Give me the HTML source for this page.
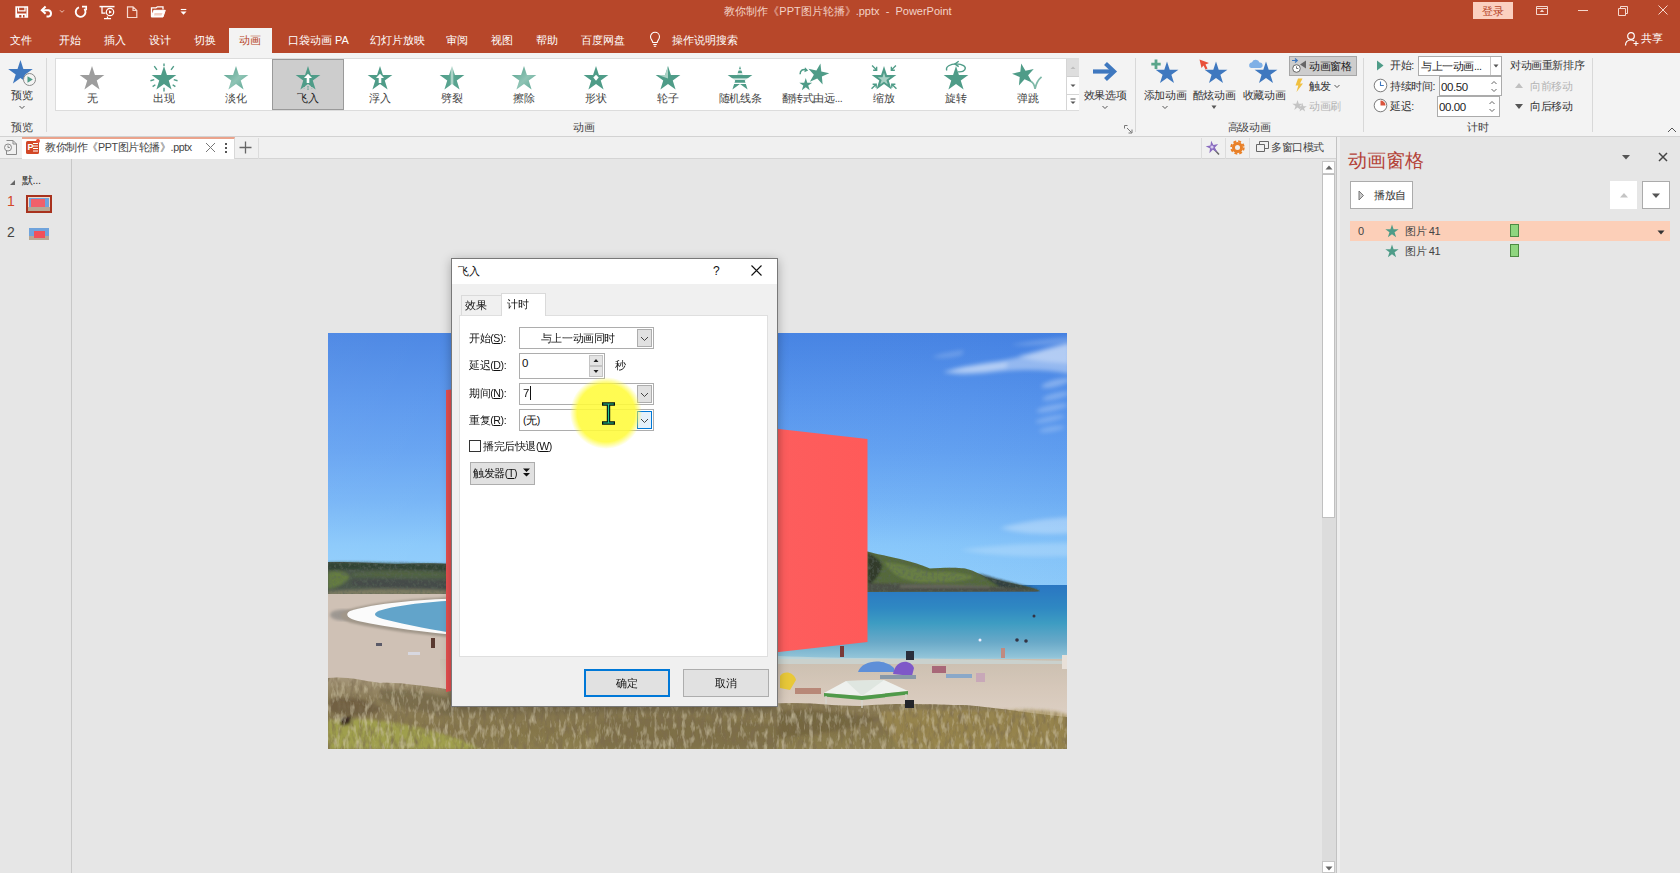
<!DOCTYPE html>
<html lang="zh">
<head>
<meta charset="utf-8">
<title>PowerPoint</title>
<style>
*{box-sizing:border-box;margin:0;padding:0}
html,body{width:1680px;height:873px;overflow:hidden;background:#e6e6e6}
body{font-family:"Liberation Sans",sans-serif;font-size:10.6px;letter-spacing:-0.4px;color:#333;position:relative}
.a{position:absolute;white-space:nowrap;line-height:1}
.t{position:absolute;white-space:nowrap;line-height:14px;height:14px;overflow:visible}
.c{text-align:center}
svg{position:absolute;overflow:visible}
#titlebar{left:0;top:0;width:1680px;height:53px;background:#b7472a}
#ribbon{left:0;top:53px;width:1680px;height:84px;background:#f3f3f3;border-bottom:1px solid #d2d2d2}
.tab{color:#fff;font-size:11px;top:33px;letter-spacing:0}
.sep{position:absolute;width:1px;background:#d8d8d8;top:58px;height:74px}
.gl{position:absolute;top:120px;font-size:10.6px;color:#444;line-height:14px;text-align:center}
.gi{position:absolute;top:59px;width:72px;height:51px}
.gi .lb{position:absolute;left:0;width:72px;top:32px;text-align:center;font-size:10.6px;line-height:14px;color:#444;white-space:nowrap}
.gi svg{left:23px;top:5.500px;width:26px;height:26px}
.big .lb{position:absolute;text-align:center;font-size:11px;line-height:14px;color:#333;white-space:nowrap}
</style>
</head>
<body>
<svg width="0" height="0" style="left:0;top:0">
<defs>
<path id="star" d="M12 1 L14.7 9.2 L23.4 9.2 L16.4 14.3 L19 22.6 L12 17.5 L5 22.6 L7.6 14.3 L0.6 9.2 L9.3 9.2 Z"/>
<linearGradient id="gfade" x1="0" y1="0" x2="1" y2="1"><stop offset="0" stop-color="#4f9c88"/><stop offset="0.55" stop-color="#8fc4b5"/><stop offset="1" stop-color="#5aa591"/></linearGradient>
<linearGradient id="gsplit" x1="0" y1="0" x2="1" y2="0"><stop offset="0" stop-color="#4f9c88"/><stop offset="0.42" stop-color="#5aa591"/><stop offset="0.5" stop-color="#c9e3da"/><stop offset="0.58" stop-color="#5aa591"/><stop offset="1" stop-color="#4f9c88"/></linearGradient>
</defs>
</svg>

<!-- ================= TITLE BAR ================= -->
<div class="a" id="titlebar"></div>
<!--QAT-->
<svg style="left:13px;top:4px" width="180" height="18" viewBox="0 0 180 18" fill="none" stroke="#fff" stroke-width="1.300">
 <!-- save -->
 <path d="M3.200 3 H14.300 V13 H3.200 Z" stroke-width="1.700"/><path d="M5.500 3 V6.800 H12 V3" stroke-width="1.300"/><path d="M4 9.500 H13.500 V13 H4 Z" fill="#fff" stroke="none"/><rect x="6.200" y="11" width="2.200" height="2.500" fill="#b7472a" stroke="none"/><rect x="10" y="11" width="1.500" height="2.500" fill="#b7472a" stroke="none"/>
 <!-- undo -->
 <path d="M29 6.200 H35.500 A3.300 3.300 0 0 1 35.500 12.600 H33.500" stroke-width="2"/><path d="M32.600 2.600 L28.800 6.200 L32.600 9.800" stroke-width="2" stroke-linejoin="miter"/>
 <path d="M47 6.300 L49 8.300 L51 6.300" stroke-width="1" stroke="#f0c8bb"/>
 <!-- redo/repeat -->
 <path d="M66 3.300 A4.900 4.900 0 1 0 71.400 4.800" stroke-width="1.900"/><path d="M69 2.700 H73.200 V6.200" stroke-width="1.700" stroke-linejoin="miter"/>
 <!-- present -->
 <path d="M86.500 2.600 H101.500" stroke-width="1.500"/><path d="M89 3 V9.200 H92.500 M94.500 12.500 V14.600 M91 14.600 H98" stroke-width="1.300"/><circle cx="97" cy="8" r="3.700" stroke-width="1.200"/><path d="M96 6.300 L99 8 L96 9.700 Z" fill="#fff" stroke="none"/>
 <!-- new -->
 <path d="M114.500 2.800 H120 L123.800 6.500 V13.500 H114.500 Z M120 2.800 V6.500 H123.800" stroke-width="1.200" stroke="#f7d9cf"/>
 <!-- open -->
 <path d="M138.500 12.500 V3.800 H143 L144.500 2.800 H150 V5.500" stroke-width="1.300"/><path d="M138.300 13 L140.800 6.300 H152.300 L150 13 Z" fill="#fff" stroke-width="1"/><path d="M141.500 9 L141 11.500 H148.500 L149.500 9 Z" fill="#f3cfc3" stroke="none"/>
 <!-- customise -->
 <path d="M167.800 5.500 H173.300" stroke-width="1.100"/><path d="M167.500 7.500 H173.500 L170.500 10.700 Z" fill="#fff" stroke="none"/>
</svg>
<!--TITLE-->
<div class="t c" style="left:638px;top:4px;width:400px;font-size:11px;letter-spacing:0;color:#f3d3c8">教你制作《PPT图片轮播》.pptx&nbsp; -&nbsp; PowerPoint</div>
<div class="a" style="left:1473px;top:2px;width:40px;height:17px;background:#fbd0c0"></div>
<div class="t c" style="left:1473px;top:4px;width:40px;font-size:10.6px;color:#b7472a">登录</div>
<svg style="left:1530px;top:0" width="150" height="22" viewBox="0 0 150 22" fill="none" stroke="#fff" stroke-width="1">
 <path d="M6.500 6.500 H17.500 V14.500 H6.500 Z M6.500 8.500 H17.500" stroke="#f5d8ce"/><path d="M12 9.5 L9.800 12 H14.200 Z" fill="#f5d8ce" stroke="none"/>
 <path d="M48 10.500 H58" stroke="#f5d8ce"/>
 <path d="M88.500 8.500 H95.500 V15.500 H88.500 Z M90.500 8.500 V6.500 H97.500 V13.500 H95.500" stroke="#f5d8ce"/>
 <path d="M128.500 5.500 L137.500 14.500 M137.500 5.500 L128.500 14.500" stroke="#f5d8ce"/>
</svg>
<!--TABS-->
<div class="a" style="left:229px;top:28px;width:43px;height:26px;background:#f3f3f3"></div>
<div class="t tab" style="left:239px;color:#b7472a">动画</div>
<div class="t tab" style="left:10px">文件</div>
<div class="t tab" style="left:59px">开始</div>
<div class="t tab" style="left:104px">插入</div>
<div class="t tab" style="left:149px">设计</div>
<div class="t tab" style="left:194px">切换</div>
<div class="t tab" style="left:288px">口袋动画 PA</div>
<div class="t tab" style="left:370px">幻灯片放映</div>
<div class="t tab" style="left:446px">审阅</div>
<div class="t tab" style="left:491px">视图</div>
<div class="t tab" style="left:536px">帮助</div>
<div class="t tab" style="left:581px">百度网盘</div>
<div class="t tab" style="left:672px">操作说明搜索</div>
<svg style="left:648px;top:31px" width="14" height="17" viewBox="0 0 14 17" fill="none" stroke="#fff" stroke-width="1.1"><path d="M4.800 11.500 C4.800 9.500 2.500 8.500 2.500 5.800 A4.500 4.500 0 0 1 11.500 5.800 C11.500 8.500 9.200 9.500 9.200 11.500 Z M5.200 13.500 H8.800 M5.800 15.300 H8.200"/></svg>
<svg style="left:1624px;top:31px" width="16" height="16" viewBox="0 0 16 16" fill="none" stroke="#fff" stroke-width="1.2"><circle cx="7" cy="5" r="3.300"/><path d="M1.500 14.500 C1.500 10.500 4 9 7 9 C8.500 9 9.500 9.400 10.300 10"/><path d="M12 10 V15 M9.500 12.500 H14.500" stroke-width="1.100"/></svg>
<div class="t tab" style="left:1641px;top:31px">共享</div>
<!-- ================= RIBBON ================= -->
<div class="a" id="ribbon"></div>
<!--RIBBON-->
<svg style="left:8px;top:59px" width="30" height="30" viewBox="0 0 30 30"><use href="#star" fill="#3f78bf" transform="translate(-0.500,0) scale(1.080)"/><circle cx="21.500" cy="20.500" r="6" fill="#f3f3f3" stroke="#8a8a8a" stroke-width="1"/><path d="M19.500 17.300 L24.800 20.500 L19.500 23.700 Z" fill="#4f9c88"/></svg>
<div class="t c" style="left:0;top:88px;width:44px;color:#333">预览</div>
<svg style="left:18px;top:105px" width="8" height="5" viewBox="0 0 8 5"><path d="M1.500 1 L4 3.500 L6.500 1" fill="none" stroke="#555" stroke-width="1"/></svg>
<div class="gl" style="left:0;width:44px">预览</div>
<div class="sep" style="left:46px"></div>
<div class="a" style="left:55px;top:58px;width:1024px;height:53px;background:#fff;border:1px solid #dcdcdc"></div>
<div class="a" style="left:272px;top:59px;width:72px;height:51px;background:#cdcdcd;border:1px solid #9a9a9a"></div>
<div class="gi" style="left:56px"><svg viewBox="0 0 24 24"><use href="#star" fill="#9d9d9d"/></svg><div class="lb">无</div></div>
<div class="gi" style="left:128px"><svg viewBox="0 0 24 24"><g stroke="#4f9c88" stroke-width="1.3" fill="none"><path d="M12 -1.500 V1 M3 1 L5.500 4.500 M21 1 L18.500 4.500 M-0.500 14.500 L3 13.500 M24.500 14.500 L21 13.500 M12 21 V24.500 M1.500 20 L4 18.200 M22.500 20 L20 18.200"/></g><use href="#star" fill="#4f9c88"/></svg><div class="lb">出现</div></div>
<div class="gi" style="left:200px"><svg viewBox="0 0 24 24"><use href="#star" fill="url(#gfade)"/></svg><div class="lb">淡化</div></div>
<div class="gi" style="left:272px"><svg viewBox="0 0 24 24"><use href="#star" fill="#4f9c88"/><path d="M12 8 L8.300 12 H10.800 V16.500 H13.200 V12 H15.700 Z" fill="#fff"/><path d="M8.500 19 V21.500 M12 19.500 V23 M15.500 19 V21.500" stroke="#4f9c88" stroke-width="1.200" stroke-dasharray="1.200 1"/></svg><div class="lb" style="color:#222">飞入</div></div>
<div class="gi" style="left:344px"><svg viewBox="0 0 24 24"><use href="#star" fill="#4f9c88"/><path d="M12 8 L8.300 12 H10.800 V16.500 H13.200 V12 H15.700 Z" fill="#fff"/></svg><div class="lb">浮入</div></div>
<div class="gi" style="left:416px"><svg viewBox="0 0 24 24"><use href="#star" fill="url(#gsplit)"/></svg><div class="lb">劈裂</div></div>
<div class="gi" style="left:488px"><svg viewBox="0 0 24 24"><use href="#star" fill="url(#gfade)"/></svg><div class="lb">擦除</div></div>
<div class="gi" style="left:560px"><svg viewBox="0 0 24 24"><use href="#star" fill="#4f9c88"/><path d="M12 9 L14.500 11.500 L12 14.500 L9.500 11.500 Z" fill="#fff"/></svg><div class="lb">形状</div></div>
<div class="gi" style="left:632px"><svg viewBox="0 0 24 24"><use href="#star" fill="#4f9c88"/><path d="M12 12.500 L12 1 L9.300 9.200 L3 9.200 Z" fill="#b5d8cd" opacity="0.9"/></svg><div class="lb">轮子</div></div>
<div class="gi" style="left:704px"><svg viewBox="0 0 24 24"><use href="#star" fill="#4f9c88"/><path d="M0 4.500 H24 M0 8.300 H24 M0 13 H24 M0 17 H24" stroke="#fff" stroke-width="1.300"/></svg><div class="lb">随机线条</div></div>
<div class="gi" style="left:776px"><svg viewBox="0 0 24 24"><use href="#star" fill="#4f9c88" transform="translate(7.500,-2.500) scale(0.860) rotate(12 12 12)"/><use href="#star" fill="#4f9c88" transform="translate(0,11.500) scale(0.520)"/><path d="M1 8.500 C1 4.500 4 3.500 7 4.500" fill="none" stroke="#4f9c88" stroke-width="1.400"/><path d="M5.500 2 L8.500 5 L5 6.800 Z" fill="#4f9c88"/></svg><div class="lb">翻转式由远...</div></div>
<div class="gi" style="left:848px"><svg viewBox="0 0 24 24"><use href="#star" fill="#4f9c88"/><use href="#star" fill="#a9d1c5" transform="translate(6,6.600) scale(0.500)"/><g stroke="#4f9c88" stroke-width="1.300" fill="none"><path d="M1 0.500 L5 4.500 M2 4.800 H5.200 V1.600 M23 0.500 L19 4.500 M22 4.800 H18.800 V1.600 M0.500 22 L4.500 18 M1.500 17.800 H4.800 V21 M23.500 22 L19.500 18 M22.500 17.800 H19.200 V21"/></g></svg><div class="lb">缩放</div></div>
<div class="gi" style="left:920px"><svg viewBox="0 0 24 24"><use href="#star" fill="#4f9c88"/><path d="M3.500 5 C2 1.500 7 -1 12 -1 C18 -1 22 1.500 20 4.500 C19 6 16 6.500 14 6.300" fill="none" stroke="#4f9c88" stroke-width="1.300"/><path d="M14.500 -3.500 L11 -1 L14.500 1.500" fill="none" stroke="#4f9c88" stroke-width="1.300"/></svg><div class="lb">旋转</div></div>
<div class="gi" style="left:992px"><svg viewBox="0 0 24 24"><use href="#star" fill="#4f9c88" transform="translate(-3,-2.500) scale(0.900) rotate(-12 12 12)"/><path d="M14.500 15 C16.500 16 18 18.500 18.500 22 C19.500 17 21.500 13.500 24.500 11" fill="none" stroke="#7fb9a8" stroke-width="1.600"/></svg><div class="lb">弹跳</div></div>
<div class="a" style="left:1066px;top:59px;width:13px;height:51px;background:#fff;border-left:1px solid #d5d5d5"></div>
<div class="a" style="left:1067px;top:59px;width:12px;height:18px;background:#dedede;border-bottom:1px solid #cfcfcf"></div>
<div class="a" style="left:1067px;top:94px;width:12px;height:1px;background:#d5d5d5"></div>
<svg style="left:1067px;top:59px" width="12" height="51" viewBox="0 0 12 51"><path d="M3.500 10 L6 7.500 L8.500 10 Z" fill="#bdbdbd"/><path d="M3.500 25.500 H8.500 L6 28 Z" fill="#555"/><path d="M3.500 40 H8.500" stroke="#555" stroke-width="1"/><path d="M3.500 42.500 H8.500 L6 45 Z" fill="#555"/></svg>
<svg style="left:1092px;top:61px" width="26" height="22" viewBox="0 0 26 22"><path d="M1 10.500 H21" stroke="#3f78bf" stroke-width="4.200" fill="none"/><path d="M13.500 2.500 L22 10.500 L13.500 18.500" stroke="#3f78bf" stroke-width="4.200" fill="none"/></svg>
<div class="t c" style="left:1080px;top:88px;width:50px;color:#333">效果选项</div>
<svg style="left:1101px;top:105px" width="8" height="5" viewBox="0 0 8 5"><path d="M1.500 1 L4 3.500 L6.500 1" fill="none" stroke="#555" stroke-width="1"/></svg>
<div class="gl" style="left:564px;width:40px">动画</div>
<svg style="left:1124px;top:125px" width="9" height="9" viewBox="0 0 9 9" fill="none" stroke="#777" stroke-width="1"><path d="M0.500 3.500 V0.500 H3.500 M3 3 L7.500 7.500 M4.500 8 H8 V4.500"/></svg>
<div class="sep" style="left:1135px"></div>
<svg style="left:1148px;top:57px" width="34" height="30" viewBox="0 0 34 30"><use href="#star" fill="#3f78bf" transform="translate(7,3.500) scale(1)"/><path d="M8 2.500 V12 M3.300 7.200 H12.700" stroke="#5aa58a" stroke-width="2.800" fill="none"/></svg>
<div class="t c" style="left:1140px;top:88px;width:50px;color:#333">添加动画</div>
<svg style="left:1197px;top:57px" width="34" height="30" viewBox="0 0 34 30"><use href="#star" fill="#3f78bf" transform="translate(7,3.500) scale(1)"/><path d="M2.500 2.500 L12 6 L8.500 7.500 L10.500 11.500 L8.500 12.500 L6.500 8.500 L4.500 11 Z" fill="#e8503a"/></svg>
<div class="t c" style="left:1189px;top:88px;width:50px;color:#333">酷炫动画</div>
<svg style="left:1247px;top:57px" width="34" height="30" viewBox="0 0 34 30"><use href="#star" fill="#3f78bf" transform="translate(7,3.500) scale(1)"/><path d="M4 11 A3 3 0 0 1 5 5.200 A4 4 0 0 1 12.500 5.500 A2.800 2.800 0 0 1 13.500 11 Z" fill="#7fb0e6"/></svg>
<div class="t c" style="left:1239px;top:88px;width:50px;color:#333">收藏动画</div>
<svg style="left:1161px;top:105px" width="8" height="5" viewBox="0 0 8 5"><path d="M1.500 1 L4 3.500 L6.500 1" fill="none" stroke="#555" stroke-width="1"/></svg>
<svg style="left:1210px;top:105px" width="8" height="5" viewBox="0 0 8 5"><path d="M1.500 0.500 H6.500 L4 4 Z" fill="#555"/></svg>
<div class="a" style="left:1289px;top:56px;width:68px;height:20px;background:#cdcdcd;border:1px solid #a6a6a6"></div>
<svg style="left:1291px;top:58px" width="16" height="16" viewBox="0 0 16 16"><path d="M15 2.500 L9 6.500 L15 10.500 Z" fill="#666"/><circle cx="5.500" cy="10.500" r="3.800" fill="#fff" stroke="#666" stroke-width="1"/><path d="M5.500 8.300 V10.500 H7.300" stroke="#666" fill="none" stroke-width="0.900"/><path d="M1 2.500 H6 M4 0.500 L6.300 2.500 L4 4.500" stroke="#3f78bf" fill="none" stroke-width="1.200"/></svg>
<div class="t" style="left:1309px;top:59px;color:#222">动画窗格</div>
<svg style="left:1294px;top:78px" width="10" height="15" viewBox="0 0 10 15"><path d="M4 0.500 H8.500 L6 5.500 H9 L2.500 14 L4.300 7.500 H1.500 Z" fill="#f0c040"/></svg>
<div class="t" style="left:1309px;top:79px;color:#333">触发</div>
<svg style="left:1333px;top:84px" width="8" height="5" viewBox="0 0 8 5"><path d="M1.500 1 L4 3.500 L6.500 1" fill="none" stroke="#555" stroke-width="1"/></svg>
<svg style="left:1292px;top:99px" width="15" height="14" viewBox="0 0 15 14"><use href="#star" fill="#c4c4c4" transform="translate(0,0.500) scale(0.460)"/><use href="#star" fill="#c4c4c4" transform="translate(5.500,3.500) scale(0.400)"/></svg>
<div class="t" style="left:1309px;top:99px;color:#b4b4b4">动画刷</div>
<div class="gl" style="left:1219px;width:60px">高级动画</div>
<div class="sep" style="left:1363px"></div>
<svg style="left:1376px;top:60px" width="8" height="11" viewBox="0 0 8 11"><path d="M1 0.500 L7.500 5.500 L1 10.500 Z" fill="#4f9c88"/></svg>
<div class="t" style="left:1390px;top:58px;color:#333">开始:</div>
<div class="a" style="left:1418px;top:56px;width:84px;height:20px;background:#fff;border:1px solid #ababab"></div>
<div class="a" style="left:1490px;top:57px;width:1px;height:18px;background:#c8c8c8"></div>
<div class="t" style="left:1421px;top:59px;color:#222">与上一动画...</div>
<svg style="left:1492px;top:64px" width="8" height="5" viewBox="0 0 8 5"><path d="M1.500 0.500 H6.500 L4 3.500 Z" fill="#555"/></svg>
<svg style="left:1373px;top:78px" width="15" height="15" viewBox="0 0 15 15"><circle cx="7.500" cy="7.500" r="6.300" fill="#fff" stroke="#7a7a7a" stroke-width="1"/><path d="M7.500 3.500 V7.500 H10.800" stroke="#3f78bf" fill="none" stroke-width="1.100"/></svg>
<div class="t" style="left:1390px;top:79px;color:#333">持续时间:</div>
<div class="a" style="left:1439px;top:76px;width:63px;height:20px;background:#fff;border:1px solid #ababab"></div>
<div class="t" style="left:1441px;top:80px;color:#222;font-size:11.500px">00.50</div>
<svg style="left:1490px;top:79px" width="8" height="15" viewBox="0 0 8 15" fill="none" stroke="#666" stroke-width="1"><path d="M1.500 5 L4 2.500 L6.500 5 M1.500 10 L4 12.500 L6.500 10"/></svg>
<svg style="left:1373px;top:98px" width="15" height="15" viewBox="0 0 15 15"><circle cx="7.500" cy="7.500" r="6.300" fill="#fff" stroke="#7a7a7a" stroke-width="1"/><path d="M7.500 7.500 V2.500 A5 5 0 0 1 12.500 7.500 Z" fill="#d9533c"/></svg>
<div class="t" style="left:1390px;top:99px;color:#333">延迟:</div>
<div class="a" style="left:1437px;top:96px;width:63px;height:21px;background:#fff;border:1px solid #ababab"></div>
<div class="t" style="left:1439px;top:100px;color:#222;font-size:11.500px">00.00</div>
<svg style="left:1488px;top:99px" width="8" height="15" viewBox="0 0 8 15" fill="none" stroke="#666" stroke-width="1"><path d="M1.500 5 L4 2.500 L6.500 5 M1.500 10 L4 12.500 L6.500 10"/></svg>
<div class="t" style="left:1510px;top:58px;color:#333">对动画重新排序</div>
<svg style="left:1514px;top:82px" width="10" height="7" viewBox="0 0 10 7"><path d="M1 6 L5 1 L9 6 Z" fill="#c0c0c0"/></svg>
<div class="t" style="left:1530px;top:79px;color:#b4b4b4">向前移动</div>
<svg style="left:1514px;top:103px" width="10" height="7" viewBox="0 0 10 7"><path d="M1 1 L5 6 L9 1 Z" fill="#555"/></svg>
<div class="t" style="left:1530px;top:99px;color:#333">向后移动</div>
<div class="gl" style="left:1458px;width:40px">计时</div>
<div class="sep" style="left:1592px"></div>
<svg style="left:1667px;top:127px" width="10" height="6" viewBox="0 0 10 6"><path d="M1 5 L5 1 L9 5" fill="none" stroke="#555" stroke-width="1"/></svg>
<!--DOCBAR-->
<div class="a" style="left:0;top:137px;width:1336px;height:22px;background:#f0f0f0;border-bottom:1px solid #d4d4d4"></div>
<svg style="left:3px;top:139px" width="16" height="18" viewBox="0 0 16 18" fill="none" stroke="#8a8a8a" stroke-width="1"><path d="M3.500 1.500 H10 L13.500 5 V15.500 H3.500 V11"/><path d="M10 1.500 V5 H13.500"/><circle cx="5" cy="8.500" r="3.500" fill="#f0f0f0"/><path d="M5 6.500 V8.500 H6.800"/></svg>
<div class="a" style="left:22px;top:137px;width:213px;height:22px;background:#fff;border-top:2px solid #eaa38c;border-right:1px solid #d8d8d8"></div>
<div class="a" style="left:26px;top:141px;width:13px;height:13px;background:#d24726;border-radius:1.500px"></div>
<div class="a" style="left:27.500px;top:142.500px;color:#fff;font-size:9px;font-weight:bold">P</div>
<div class="a" style="left:33px;top:143px;width:5px;height:1px;background:#fff;box-shadow:0 2.500px 0 #fff,0 5px 0 #fff,0 7.500px 0 #fff"></div>
<div class="a" style="left:36px;top:139px;width:4px;height:4px;border-radius:2px;background:#e8503a"></div>
<div class="t" style="left:45px;top:140px;font-size:10.700px;color:#444">教你制作《PPT图片轮播》.pptx</div>
<svg style="left:205px;top:142px" width="11" height="11" viewBox="0 0 11 11"><path d="M1 1 L10 10 M10 1 L1 10" stroke="#777" stroke-width="1" fill="none"/></svg>
<div class="a" style="left:225px;top:143px;width:2px;height:2px;background:#555;box-shadow:0 4px 0 #555,0 8px 0 #555"></div>
<svg style="left:239px;top:141px" width="13" height="13" viewBox="0 0 13 13"><path d="M6.500 0.500 V12.500 M0.500 6.500 H12.500" stroke="#666" stroke-width="1.300" fill="none"/></svg>
<div class="a" style="left:258px;top:138px;width:1px;height:21px;background:#dcdcdc"></div>
<div class="a" style="left:1201px;top:138px;width:1px;height:21px;background:#dcdcdc"></div>
<div class="a" style="left:1225px;top:138px;width:1px;height:21px;background:#dcdcdc"></div>
<div class="a" style="left:1249px;top:138px;width:1px;height:21px;background:#dcdcdc"></div>
<svg style="left:1205px;top:140px" width="16" height="16" viewBox="0 0 16 16"><path d="M8.500 8.500 L14 14.500" stroke="#666" stroke-width="1.500"/><use href="#star" fill="#8a6cc0" transform="translate(0.500,0) scale(0.560) rotate(-10 12 12)"/><circle cx="7" cy="7" r="1.600" fill="#d8ccf0"/></svg>
<svg style="left:1230px;top:140px" width="15" height="15" viewBox="0 0 15 15"><circle cx="7.500" cy="7.500" r="4" fill="none" stroke="#e98028" stroke-width="3"/><circle cx="7.500" cy="7.500" r="6.200" fill="none" stroke="#e98028" stroke-width="2" stroke-dasharray="2.800 2.070"/></svg>
<svg style="left:1256px;top:141px" width="13" height="12" viewBox="0 0 13 12" fill="none" stroke="#666" stroke-width="1"><path d="M0.500 3.500 H8.500 V10.500 H0.500 Z M3.500 3.500 V0.500 H12.500 V7.500 H8.500"/></svg>
<div class="t" style="left:1271px;top:140px;color:#444;font-size:10.800px">多窗口模式</div>
<!--LEFT-->
<div class="a" style="left:0;top:159px;width:72px;height:714px;background:#e6e6e6;border-right:1px solid #c8c8c8"></div>
<svg style="left:9px;top:179px" width="7" height="7" viewBox="0 0 7 7"><path d="M6 1 V6 H1 Z" fill="#666"/></svg>
<div class="t" style="left:22px;top:173px;color:#333;font-size:11px">默...</div>
<div class="t" style="left:7px;top:194px;color:#d24726;font-size:14px">1</div>
<div class="t" style="left:7px;top:225px;color:#444;font-size:14px">2</div>
<div class="a" style="left:26px;top:195px;width:26px;height:18px;background:#6fa3dc;border:2px solid #a8321e;box-shadow:inset 0 0 0 1px #f3d9c8"></div>
<div class="a" style="left:28px;top:207px;width:22px;height:4px;background:#b8a894"></div>
<div class="a" style="left:31px;top:199px;width:14px;height:8px;background:#f0606a"></div>
<div class="a" style="left:29px;top:228px;width:20px;height:12px;background:#6fa3dc"></div>
<div class="a" style="left:29px;top:236px;width:20px;height:4px;background:#b8a894"></div>
<div class="a" style="left:34px;top:231px;width:11px;height:7px;background:#f0505a"></div>
<!--SLIDE-->
<svg style="left:328px;top:333px" width="739" height="416" viewBox="328 333 739 416">
<defs>
<linearGradient id="sky" x1="0" y1="0" x2="0" y2="1"><stop offset="0" stop-color="#4683e3"/><stop offset="0.28" stop-color="#5896ed"/><stop offset="0.45" stop-color="#62a1f1"/><stop offset="0.65" stop-color="#73b3f6"/><stop offset="0.82" stop-color="#88c8fb"/><stop offset="1" stop-color="#93d0fc"/></linearGradient>
<linearGradient id="skyh" x1="0" y1="0" x2="1" y2="0"><stop offset="0" stop-color="#fff" stop-opacity="0.060"/><stop offset="0.5" stop-color="#fff" stop-opacity="0"/><stop offset="1" stop-color="#1848c0" stop-opacity="0.050"/></linearGradient>
<linearGradient id="sea" x1="0" y1="0" x2="0" y2="1"><stop offset="0" stop-color="#2a76c2"/><stop offset="0.3" stop-color="#2f88c2"/><stop offset="0.5" stop-color="#3d9cc2"/><stop offset="0.75" stop-color="#69a9c8"/><stop offset="0.95" stop-color="#92c4d8"/><stop offset="1" stop-color="#b8d4dc"/></linearGradient>
<linearGradient id="sand" x1="0" y1="0" x2="0" y2="1"><stop offset="0" stop-color="#cbbfb0"/><stop offset="0.5" stop-color="#d6c8ba"/><stop offset="1" stop-color="#ddd0c4"/></linearGradient>
<linearGradient id="grass" x1="0" y1="0" x2="0" y2="1"><stop offset="0" stop-color="#a59679"/><stop offset="0.3" stop-color="#8b7c58"/><stop offset="0.75" stop-color="#85764a"/><stop offset="1" stop-color="#8d7f50"/></linearGradient>
<linearGradient id="hill" x1="0" y1="0" x2="0" y2="1"><stop offset="0" stop-color="#3f5233"/><stop offset="0.5" stop-color="#4a5d38"/><stop offset="1" stop-color="#39432f"/></linearGradient>
<linearGradient id="red" x1="0" y1="0" x2="1" y2="0"><stop offset="0" stop-color="#e65555"/><stop offset="0.14" stop-color="#fd5d5d"/><stop offset="1" stop-color="#ff5a59"/></linearGradient>
<filter id="b3" x="900" y="320" width="200" height="260" filterUnits="userSpaceOnUse"><feGaussianBlur stdDeviation="2.200"/></filter>
<filter id="b1"><feGaussianBlur stdDeviation="1"/></filter>
<filter id="b2"><feGaussianBlur stdDeviation="1.800"/></filter>
<filter id="tex" x="328" y="540" width="740" height="210" filterUnits="userSpaceOnUse">
 <feTurbulence type="fractalNoise" baseFrequency="0.22 0.08" numOctaves="3" seed="7" result="n"/>
 <feColorMatrix in="n" type="matrix" values="0 0 0 0 0.200  0 0 0 0 0.150  0 0 0 0 0.080  1.800 0 0 0 -0.780" result="a"/>
 <feColorMatrix in="n" type="matrix" values="0 0 0 0 0.780  0 0 0 0 0.700  0 0 0 0 0.480  0 1.200 0 0 -0.600" result="l"/>
 <feComposite in="a" in2="SourceGraphic" operator="in" result="dark"/>
 <feComposite in="l" in2="SourceGraphic" operator="in" result="lite"/>
 <feMerge><feMergeNode in="SourceGraphic"/><feMergeNode in="dark"/><feMergeNode in="lite"/></feMerge>
</filter>
<filter id="tex2" x="328" y="540" width="740" height="60" filterUnits="userSpaceOnUse">
 <feTurbulence type="fractalNoise" baseFrequency="0.35 0.300" numOctaves="2" seed="11" result="n"/>
 <feColorMatrix in="n" type="matrix" values="0 0 0 0 0.100  0 0 0 0 0.130  0 0 0 0 0.100  1.600 0 0 0 -0.720" result="a"/>
 <feComposite in="a" in2="SourceGraphic" operator="in" result="dark"/>
 <feMerge><feMergeNode in="SourceGraphic"/><feMergeNode in="dark"/></feMerge>
</filter>
<clipPath id="sc"><rect x="328" y="333" width="739" height="416"/></clipPath>
</defs>
<g clip-path="url(#sc)">
<rect x="328" y="333" width="739" height="260" fill="url(#sky)"/><rect x="328" y="333" width="739" height="260" fill="url(#skyh)"/>
<!-- clouds -->
<g filter="url(#b3)" fill="#fff">
 <path d="M943 372 C960 366 985 363 1005 360 C1028 356 1048 348 1070 343 L1070 374 C1050 370 1030 369 1005 371 C985 373 960 377 943 372 Z" opacity="0.400"/>
 <path d="M950 371 C968 366 990 364 1008 362 L1006 368 C988 371 968 373 950 371 Z" opacity="0.300"/>
 <path d="M1018 356 C1036 351 1054 346 1070 343 L1070 364 C1052 362 1034 362 1018 356 Z" opacity="0.300"/>
 <path d="M1010 345 C1030 341 1052 338 1070 337 L1070 343 C1050 345 1030 346 1010 345 Z" opacity="0.200"/>
 <path d="M932 357 C942 353 954 351 964 350 L962 355 C952 358 940 359 932 357 Z" opacity="0.180"/>
 <ellipse cx="1056" cy="383" rx="15" ry="3.500" transform="rotate(-14 1056 383)" opacity="0.300"/>
 <ellipse cx="1056" cy="396" rx="14" ry="3" transform="rotate(-14 1056 396)" opacity="0.260"/>
 <ellipse cx="1052" cy="408" rx="16" ry="3" transform="rotate(-12 1052 408)" opacity="0.250"/>
 <ellipse cx="1050" cy="419" rx="15" ry="2.500" transform="rotate(-12 1050 419)" opacity="0.230"/>
 <ellipse cx="1052" cy="429" rx="13" ry="2.500" transform="rotate(-10 1052 429)" opacity="0.220"/>
 <path d="M1000 528 C1025 521 1050 518 1072 517 L1072 533 C1045 535 1020 534 1000 528 Z" opacity="0.300"/>
 <path d="M960 550 C1000 544 1040 543 1072 543 L1072 556 C1040 557 1000 557 960 550 Z" opacity="0.200"/>
</g>
<g filter="url(#tex2)">
<!-- left hill -->
<path d="M328 562 C350 561.500 375 563 395 564 C415 563 438 563 456 564 L456 596 L328 596 Z" fill="#49554a"/>
<g filter="url(#b2)"><path d="M328 563 C370 562 420 564 456 565 L456 571 C420 570 370 569 328 570 Z" fill="#2c4030" opacity="0.900"/><path d="M328 572 C338 570 348 572 350 577 C346 584 336 588 328 589 Z" fill="#6a8240" opacity="0.850"/><path d="M352 573 C390 569 430 571 456 573 L456 578 C420 578 385 578 352 577 Z" fill="#56683f" opacity="0.700"/><path d="M352 580 C390 578 430 580 456 582 L456 589 C420 590 380 589 352 585 Z" fill="#43474a" opacity="0.700"/><path d="M328 591 C370 588 420 589 456 591 L456 596 L328 596 Z" fill="#8a8468" opacity="0.800"/></g>
</g>
<!-- sea right -->
<rect x="452" y="585" width="620" height="76" fill="url(#sea)"/>
<g filter="url(#tex2)">
<!-- right hill -->
<path d="M860 550 C870 552 885 556 900 559 C912 562 922 565 930 568.500 C940 568 955 567 965 568.500 C972 570 980 574 986 577 C996 580 1010 583 1020 585 L1034 588.500 L1040 591 L860 592 Z" fill="#55693b"/>
<g filter="url(#b1)">
 <path d="M868 553 C874 556 880 560 882 566 C880 574 874 582 868 586 Z" fill="#2b3528" opacity="0.900"/>
 <path d="M884 562 C900 563 915 568 930 572 C950 571 965 573 975 577 C965 582 940 583 920 582 C905 581 892 576 884 562 Z" fill="#6f8545" opacity="0.750"/>
 <path d="M868 583 C920 584 980 585 1036 589 L1040 592 L868 592 Z" fill="#4c4e46" opacity="0.950"/>
 <path d="M978 573 C992 578 1012 583 1036 588.500 L1000 587 Z" fill="#33403f"/>
 <path d="M900 585 C930 584 960 585 990 586 L990 588 L900 588 Z" fill="#77776c" opacity="0.600"/>
</g>
</g>
<!-- sand -->
<rect x="328" y="594" width="130" height="110" fill="#cfc1b5"/>
<rect x="440" y="659" width="630" height="60" fill="url(#sand)"/>
<path d="M777 656 C850 659 950 658 1067 661 L1067 664 L777 664 Z" fill="#c9d8d8" opacity="0.700"/>
<!-- left sea crescent -->
<ellipse cx="343" cy="615" rx="13" ry="5.500" fill="#8d8a86" opacity="0.750" filter="url(#b2)"/>
<path d="M456 597 C420 598 370 602 345 611 C337 615 341 620 352 623 C385 630.500 425 635 456 637.500 Z" fill="#a1978a" filter="url(#b1)"/>
<path d="M456 598.500 C420 599.500 375 603 350 611 C344 614.500 348 618.500 358 621 C390 628 428 632.500 456 635 Z" fill="#fbfbfb"/>
<path d="M456 600.500 C430 601.500 398 605 380 610.500 C372 613.500 374 616.500 383 619 C408 625 436 630.500 456 633.500 Z" fill="#62a4ca"/>
<!-- grass -->
<g filter="url(#tex)">
<path d="M328 678 C345 676 360 680 380 683 C400 682 420 686 440 688 C452 690 460 692 470 694 L770 704 C800 701 830 706 860 706 C900 702 940 705 965 705 C1000 708 1035 714 1067 717 L1067 749 L328 749 Z" fill="url(#grass)"/>
<g filter="url(#b2)">
 <path d="M328 720 C360 716 400 722 430 730 C450 736 470 742 480 749 L328 749 Z" fill="#a3a650" opacity="0.850"/>
 <path d="M330 700 C350 694 372 700 382 710 C370 718 345 716 330 712 Z" fill="#6a5a40" opacity="0.800"/>
 <path d="M340 718 L352 716 L350 724 L341 726 Z" fill="#3a2c20"/>
 <path d="M380 690 C410 688 440 694 452 700 L452 716 C420 712 395 706 380 700 Z" fill="#74684a" opacity="0.700"/>
 <path d="M777 712 C810 704 850 716 880 718 C860 730 800 736 777 738 Z" fill="#6e5f3a" opacity="0.700"/>
 <path d="M880 712 C920 706 970 712 1010 710 C1040 708 1060 712 1067 714 L1067 749 L900 749 C890 736 884 724 880 712 Z" fill="#a08c50" opacity="0.600"/>
 <path d="M600 720 C650 714 720 720 777 724 L777 749 L600 749 Z" fill="#7a6c46" opacity="0.700"/>
</g>
</g>
<!-- beach details right -->
<g>
 <path d="M824 693 L846 681 L884 680 L908 691 L862 696 Z" fill="#eef1ee"/><path d="M846 681 L862 696 L884 680 Z" fill="#dfe6e0"/><path d="M824 693 L862 696 L908 691 L908 694.500 L862 700 L824 696.500 Z" fill="#4f9a4a"/><path d="M826 696 V704 M862 700 V708 M906 694 V706" stroke="#d8d8d0" stroke-width="1.200"/>
 <path d="M858 672 C862 660 884 658 894 668 L894 672 Z" fill="#5e8fd8"/><path d="M893 674 C895 660 910 658 914 668 L912 676 Z" fill="#7e58c8"/>
 <rect x="906" y="651" width="8" height="9" fill="#2a2f3c"/><rect x="840" y="646" width="4" height="11" fill="#7a3a38"/><rect x="1001" y="648" width="4" height="10" fill="#c08a80"/><rect x="1062" y="655" width="5" height="14" fill="#e8e0d8"/>
 <rect x="880" y="675" width="36" height="4" fill="#8898a8"/><rect x="946" y="674" width="26" height="4" fill="#8aa8c8"/><rect x="976" y="673" width="9" height="9" fill="#c8a8b8"/><rect x="932" y="666" width="14" height="7" fill="#a86878"/>
 <path d="M780 676 C784 670 794 672 796 680 L790 690 L780 688 Z" fill="#e8c838"/><rect x="795" y="688" width="26" height="6" fill="#b88878"/><rect x="905" y="700" width="9" height="8" fill="#22242a"/>
 <rect x="431" y="638" width="4" height="10" fill="#5a3a30"/><rect x="376" y="643" width="6" height="3" fill="#5a5a68"/><rect x="408" y="652" width="12" height="3" fill="#d8d8e0"/>
 <circle cx="1034" cy="616" r="1.500" fill="#334"/><circle cx="1017" cy="640" r="1.800" fill="#334"/><circle cx="1026" cy="641" r="1.800" fill="#334"/><circle cx="980" cy="640" r="1.500" fill="#eef"/>
</g>
<!-- red panels -->
<path d="M446 390 L456 389 L456 690 L446 692 Z" fill="#e85050"/>
<path d="M770 428 L867.500 439 L867.500 642 L770 653 Z" fill="url(#red)"/>
</g>
</svg>
<!--SCROLL-->
<div class="a" style="left:1322px;top:161px;width:14px;height:712px;background:#dcdcdc"></div>
<div class="a" style="left:1322px;top:161px;width:13px;height:13px;background:#fff;border:1px solid #c6c6c6"></div>
<svg style="left:1325px;top:165px" width="8" height="5" viewBox="0 0 8 5"><path d="M0.500 4.500 L4 0.500 L7.500 4.500 Z" fill="#666"/></svg>
<div class="a" style="left:1322px;top:174px;width:13px;height:344px;background:#fff;border:1px solid #c0c0c0"></div>
<div class="a" style="left:1322px;top:861px;width:13px;height:12px;background:#fff;border:1px solid #c6c6c6"></div>
<svg style="left:1325px;top:866px" width="8" height="5" viewBox="0 0 8 5"><path d="M0.500 0.500 L4 4.500 L7.500 0.500 Z" fill="#666"/></svg>
<!--PANE-->
<div class="a" style="left:1336px;top:137px;width:344px;height:736px;background:#e6e6e6;border-left:1px solid #c2c2c2"></div>
<div class="a" style="left:1337px;top:137px;width:3px;height:736px;background:#eeeeee"></div>
<div class="a" style="left:1348px;top:151px;font-size:18.500px;color:#b44238;line-height:20px;letter-spacing:0">动画窗格</div>
<svg style="left:1621px;top:154px" width="10" height="6" viewBox="0 0 10 6"><path d="M1 1 H9 L5 5.500 Z" fill="#555"/></svg>
<svg style="left:1658px;top:152px" width="10" height="10" viewBox="0 0 10 10"><path d="M1 1 L9 9 M9 1 L1 9" stroke="#444" stroke-width="1.500" fill="none"/></svg>
<div class="a" style="left:1350px;top:181px;width:63px;height:28px;background:#fff;border:1px solid #ababab"></div>
<svg style="left:1358px;top:190px" width="7" height="11" viewBox="0 0 7 11"><path d="M1 1 L5.500 5.500 L1 10 Z" fill="#c8c8c8" stroke="#777" stroke-width="1"/></svg>
<div class="t" style="left:1374px;top:188px;color:#333;font-size:11px">播放自</div>
<div class="a" style="left:1610px;top:181px;width:27px;height:28px;background:#fff"></div>
<svg style="left:1619px;top:192px" width="10" height="6" viewBox="0 0 10 6"><path d="M1 5.500 H9 L5 1 Z" fill="#c4c4c4"/></svg>
<div class="a" style="left:1642px;top:181px;width:28px;height:28px;background:#fff;border:1px solid #ababab"></div>
<svg style="left:1651px;top:193px" width="10" height="6" viewBox="0 0 10 6"><path d="M1 0.500 H9 L5 5 Z" fill="#555"/></svg>
<div class="a" style="left:1350px;top:221px;width:320px;height:20px;background:#fccfb8"></div>
<div class="t" style="left:1358px;top:224px;color:#444;font-size:11px">0</div>
<svg style="left:1385px;top:224px" width="14" height="14" viewBox="0 0 24 24"><use href="#star" fill="#4f9c88"/></svg>
<div class="t" style="left:1405px;top:224px;color:#444;font-size:11px">图片 41</div>
<div class="a" style="left:1510px;top:224px;width:9px;height:13px;background:#8fd67f;border:1px solid #4d8b43"></div>
<svg style="left:1657px;top:230px" width="8" height="5" viewBox="0 0 8 5"><path d="M0.500 0.500 H7.500 L4 4.500 Z" fill="#333"/></svg>
<svg style="left:1385px;top:244px" width="14" height="14" viewBox="0 0 24 24"><use href="#star" fill="#4f9c88"/></svg>
<div class="t" style="left:1405px;top:244px;color:#444;font-size:11px">图片 41</div>
<div class="a" style="left:1510px;top:244px;width:9px;height:13px;background:#8fd67f;border:1px solid #4d8b43"></div>
<!--DIALOG-->
<div class="a" style="left:451px;top:258px;width:327px;height:449px;background:#f0f0f0;border:1px solid #787878;box-shadow:0 2px 10px rgba(0,0,0,0.280)"></div>
<div class="a" style="left:452px;top:259px;width:325px;height:25px;background:#fff"></div>
<div class="t" style="left:458px;top:264px;color:#111;font-size:10.6px">飞入</div>
<div class="t" style="left:713px;top:264px;color:#111;font-size:12px">?</div>
<svg style="left:751px;top:265px" width="11" height="11" viewBox="0 0 11 11"><path d="M0.500 0.500 L10.500 10.500 M10.500 0.500 L0.500 10.500" stroke="#111" stroke-width="1.100" fill="none"/></svg>
<div class="a" style="left:459px;top:315px;width:309px;height:342px;background:#fff;border:1px solid #dfdfdf"></div>
<div class="a" style="left:461px;top:295px;width:41px;height:20px;background:#f0f0f0;border:1px solid #dadada;border-bottom:none"></div>
<div class="a" style="left:501px;top:293px;width:45px;height:23px;background:#fff;border:1px solid #dadada;border-bottom:none"></div>
<div class="t" style="left:465px;top:298px;color:#111;font-size:10.6px">效果</div>
<div class="t" style="left:507px;top:297px;color:#111;font-size:10.6px">计时</div>
<div class="t" style="left:469px;top:331px;color:#111;font-size:10.6px">开始(<u>S</u>):</div>
<div class="a" style="left:519px;top:327px;width:135px;height:22px;background:#fff;border:1px solid #adadad"></div>
<div class="t c" style="left:520px;top:331px;width:116px;color:#111;font-size:10.6px">与上一动画同时</div>
<div class="a" style="left:637px;top:329px;width:15px;height:18px;background:#e1e1e1;border:1px solid #adadad"></div>
<svg style="left:640px;top:336px" width="9" height="6" viewBox="0 0 9 6"><path d="M1 1 L4.500 4.500 L8 1" fill="none" stroke="#444" stroke-width="1"/></svg>
<div class="t" style="left:469px;top:358px;color:#111;font-size:10.6px">延迟(<u>D</u>):</div>
<div class="a" style="left:519px;top:353px;width:86px;height:26px;background:#fff;border:1px solid #adadad"></div>
<div class="t" style="left:522px;top:356px;color:#111;font-size:11.500px">0</div>
<div class="a" style="left:589px;top:355px;width:14px;height:11px;background:#e4e4e4;border:1px solid #c4c4c4"></div>
<div class="a" style="left:589px;top:366px;width:14px;height:11px;background:#e4e4e4;border:1px solid #c4c4c4"></div>
<svg style="left:593px;top:358px" width="6" height="16" viewBox="0 0 6 16"><path d="M0.500 4 L3 1 L5.500 4 Z M0.500 12 L3 15 L5.500 12 Z" fill="#222"/></svg>
<div class="t" style="left:615px;top:358px;color:#111;font-size:10.6px">秒</div>
<div class="t" style="left:469px;top:386px;color:#111;font-size:10.6px">期间(<u>N</u>):</div>
<div class="a" style="left:519px;top:383px;width:135px;height:22px;background:#fff;border:1px solid #adadad"></div>
<div class="t" style="left:523px;top:386px;color:#111;font-size:11.500px">7</div>
<div class="a" style="left:530px;top:386px;width:1px;height:14px;background:#111"></div>
<div class="a" style="left:637px;top:385px;width:15px;height:18px;background:#e1e1e1;border:1px solid #adadad"></div>
<svg style="left:640px;top:392px" width="9" height="6" viewBox="0 0 9 6"><path d="M1 1 L4.500 4.500 L8 1" fill="none" stroke="#444" stroke-width="1"/></svg>
<div class="t" style="left:469px;top:413px;color:#111;font-size:10.6px">重复(<u>R</u>):</div>
<div class="a" style="left:519px;top:409px;width:135px;height:22px;background:#fff;border:1px solid #adadad"></div>
<div class="t" style="left:523px;top:413px;color:#111;font-size:10.6px">(无)</div>
<div class="a" style="left:637px;top:411px;width:15px;height:18px;background:#e5f1fb;border:1px solid #0078d7"></div>
<svg style="left:640px;top:418px" width="9" height="6" viewBox="0 0 9 6"><path d="M1 1 L4.500 4.500 L8 1" fill="none" stroke="#444" stroke-width="1"/></svg>
<div class="a" style="left:469px;top:440px;width:12px;height:12px;background:#fff;border:1px solid #333"></div>
<div class="t" style="left:483px;top:439px;color:#111;font-size:10.6px">播完后快退(<u>W</u>)</div>
<div class="a" style="left:470px;top:462px;width:65px;height:23px;background:#e1e1e1;border:1px solid #adadad"></div>
<div class="t" style="left:473px;top:466px;color:#111;font-size:10.6px">触发器(<u>T</u>)</div>
<svg style="left:522px;top:468px" width="9" height="10" viewBox="0 0 9 10"><path d="M1 0.500 H8 L4.500 4 Z M1 5 H8 L4.500 8.500 Z" fill="#111"/></svg>
<div class="a" style="left:584px;top:669px;width:86px;height:28px;background:#e1e1e1;border:2px solid #0078d7"></div>
<div class="t c" style="left:584px;top:676px;width:86px;color:#111;font-size:10.6px">确定</div>
<div class="a" style="left:683px;top:669px;width:86px;height:28px;background:#e1e1e1;border:1px solid #adadad"></div>
<div class="t c" style="left:683px;top:676px;width:86px;color:#111;font-size:10.6px">取消</div>
<!-- cursor highlight -->
<div class="a" style="left:570px;top:377px;width:72px;height:72px;border-radius:36px;background:radial-gradient(circle closest-side,rgba(255,251,58,0.880) 0,rgba(255,251,58,0.880) 80%,rgba(255,252,70,0) 100%)"></div>
<svg style="left:601px;top:402px" width="15" height="23" viewBox="0 0 15 23"><path d="M1 2 H14 M1 21 H14 M7.500 2 V21" stroke="#04140f" stroke-width="3.400" fill="none" stroke-linecap="butt"/><path d="M2.200 2 H12.800 M2.200 21 H12.800 M7.500 2 V21" stroke="#25c48e" stroke-width="1.200" fill="none"/></svg>
</body>
</html>
